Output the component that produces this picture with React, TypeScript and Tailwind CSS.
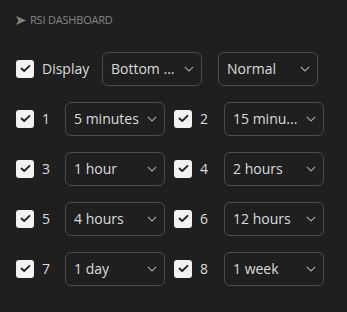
const ROWS: [string, string, string, string][] = [
  ["1", "5 minutes", "2", "15 minu..."],
  ["3", "1 hour", "4", "2 hours"],
  ["5", "4 hours", "6", "12 hours"],
  ["7", "1 day", "8", "1 week"],
];

function Check() {
  return (
    <span className="flex h-[18px] w-[18px] shrink-0 items-center justify-center rounded-[3px] bg-[#f2f2f2]">
      <svg width="11" height="9" viewBox="0 0 11 9" fill="none">
        <path d="M1.5 4.5 L4.2 7 L9.5 1.8" stroke="#1f1f1f" strokeWidth="1.8" strokeLinecap="round" strokeLinejoin="round" />
      </svg>
    </span>
  );
}

function Select({ value, className = "" }: { value: string; className?: string }) {
  return (
    <div
      className={`flex h-[34px] w-[100px] items-center justify-between rounded-[6px] border border-[#4b4b4b] pl-[8px] pr-[7px] text-[14px] text-[#dcdcdc] ${className}`}
    >
      <span>{value}</span>
      <svg width="10" height="6" viewBox="0 0 10 6" fill="none">
        <path d="M0.8 0.8 L5 5 L9.2 0.8" stroke="#a8a8a8" strokeWidth="1.1" />
      </svg>
    </div>
  );
}

export default function App() {
  return (
    <div className="h-[312px] w-[347px] bg-[#1f1f1f] font-['Open_Sans',sans-serif]">
      <div className="flex items-center gap-[4px] pl-[16px] pt-[12px] text-[11px] text-[#858585]">
        <svg width="10" height="9" viewBox="0 0 10 9">
          <path d="M0 0 L10 4.5 L0 9 L2.5 4.5 Z" fill="#858585" />
        </svg>
        <span className="tracking-[-0.2px]">RSI DASHBOARD</span>
      </div>
      <div className="mt-[23px] flex h-[34px] items-center pl-[16px]">
        <Check />
        <span className="ml-[8px] w-[60px] text-[14px] text-[#dcdcdc]">Display</span>
        <Select value="Bottom ..." />
        <Select value="Normal" className="ml-[16px]" />
      </div>
      <div className="mt-[16px] flex flex-col gap-[16px]">
        {ROWS.map(([a, va, b, vb]) => (
          <div key={a} className="flex h-[34px] items-center pl-[16px]">
            <Check />
            <span className="ml-[8px] w-[23px] text-[14px] text-[#dcdcdc]">{a}</span>
            <Select value={va} />
            <span className="ml-[9px]">
              <Check />
            </span>
            <span className="ml-[8px] w-[24px] text-[14px] text-[#dcdcdc]">{b}</span>
            <Select value={vb} />
          </div>
        ))}
      </div>
    </div>
  );
}
